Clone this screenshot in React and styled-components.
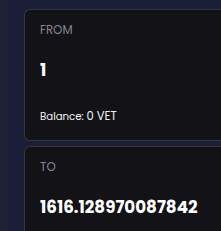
import React from 'react';
import styled, { createGlobalStyle } from 'styled-components';

const Global = createGlobalStyle`
  html, body {
    margin: 0;
    padding: 0;
    background: #1b1e38;
    font-family: Poppins, "DejaVu Sans", "Liberation Sans", sans-serif;
  }
`;

const Page = styled.div`
  display: flex;
  height: 231px;
  overflow: hidden;
`;

const Rail = styled.div`
  width: 8px;
  flex-shrink: 0;
  background: #1e2136;
`;

const Column = styled.div`
  flex: 1;
  display: flex;
  flex-direction: column;
  gap: 5px;
  padding: 9px 0 0 16px;
`;

const Card = styled.div`
  flex-shrink: 0;
  background: #121217;
  border: 1px solid #35353f;
  border-right: none;
  border-radius: 6px 0 0 6px;
  padding: 13px 0 0 15px;
  height: ${(p) => p.$h}px;
  box-sizing: border-box;
`;

const Label = styled.div`
  color: #85858f;
  font-size: 11.8px;
  line-height: 14px;
`;

const Amount = styled.div`
  color: #ffffff;
  font-weight: bold;
  font-size: 16.7px;
  line-height: 20px;
  margin-top: 23px;
`;

const Balance = styled.div`
  color: #f2f2f2;
  font-size: 10.2px;
  line-height: 14px;
  margin-top: 29px;

  span {
    font-size: 11.5px;
  }
`;

export default function App() {
  return (
    <>
      <Global />
      <Page>
        <Rail />
        <Column>
          <Card $h={132}>
            <Label>FROM</Label>
            <Amount>1</Amount>
            <Balance>
              Balance: <span>0 VET</span>
            </Balance>
          </Card>
          <Card $h={100}>
            <Label>TO</Label>
            <Amount>1616.128970087842</Amount>
          </Card>
        </Column>
      </Page>
    </>
  );
}
